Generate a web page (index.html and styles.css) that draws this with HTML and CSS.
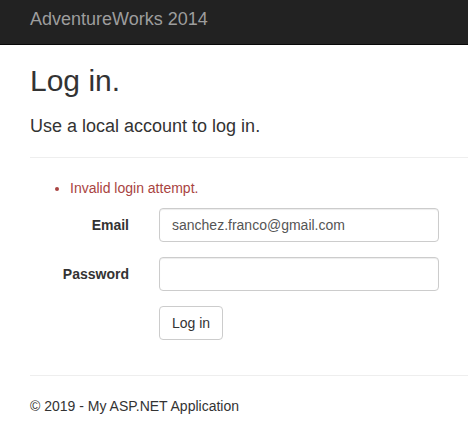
FILE: index.html
```html
<!DOCTYPE html>
<html>
<head>
<meta charset="utf-8">
<title>Log in - AdventureWorks 2014</title>
<link rel="stylesheet" href="styles.css">
</head>
<body>
<div class="navbar">
  <a class="navbar-brand" href="#">AdventureWorks 2014</a>
</div>
<div class="body-content">
  <h2 class="title">Log in.</h2>
  <section class="login">
    <form class="form-horizontal">
      <h4 class="subtitle">Use a local account to log in.</h4>
      <hr class="divider">
      <div class="validation-summary">
        <ul class="errors">
          <li>Invalid login attempt.</li>
        </ul>
      </div>
      <div class="form-group">
        <label class="control-label" for="Email">Email</label>
        <input class="form-control" id="Email" type="text" value="sanchez.franco@gmail.com">
      </div>
      <div class="form-group">
        <label class="control-label" for="Password">Password</label>
        <input class="form-control" id="Password" type="password">
      </div>
      <div class="form-group">
        <span class="control-label"></span>
        <button type="button" class="btn">Log in</button>
      </div>
    </form>
  </section>
  <hr class="divider footer-divider">
  <footer class="footer">
    <p>&copy; 2019 - My ASP.NET Application</p>
  </footer>
</div>
</body>
</html>
```

FILE: styles.css
```css
* {
  box-sizing: border-box;
}

html, body {
  margin: 0;
  padding: 0;
  background: #fff;
}

body {
  font-family: "Liberation Sans", Arial, sans-serif;
  font-size: 14px;
  line-height: 20px;
  color: #333;
  overflow: hidden;
}

.navbar {
  height: 45px;
  background: #222;
  border-bottom: 1px solid #080808;
  padding: 9px 30px 0;
}

.navbar-brand {
  display: block;
  font-size: 18px;
  line-height: 20px;
  color: #9d9d9d;
  text-decoration: none;
}

.body-content {
  padding-left: 30px;
}

.title {
  font-size: 30px;
  font-weight: 500;
  line-height: 33px;
  margin: 19px 0 20px;
}

.subtitle {
  font-size: 18px;
  font-weight: 500;
  line-height: 19.8px;
  margin: 0;
}

.divider {
  border: 0;
  border-top: 1px solid #eee;
  height: 1px;
  margin: 20px 0;
}

.errors {
  margin: 0 0 10px;
  padding-left: 40px;
  color: #a94442;
}

.form-group {
  display: flex;
  align-items: flex-start;
  gap: 30px;
  margin-bottom: 15px;
}

.control-label {
  width: 99px;
  flex: 0 0 99px;
  text-align: right;
  font-weight: bold;
  padding-top: 7px;
  line-height: 20px;
}

.form-control {
  width: 280px;
  height: 34px;
  padding: 6px 12px;
  font-family: inherit;
  font-size: 14px;
  line-height: 20px;
  color: #555;
  background: #fff;
  border: 1px solid #ccc;
  border-radius: 4px;
  box-shadow: inset 0 1px 1px rgba(0, 0, 0, 0.075);
  outline: none;
}

.btn {
  height: 34px;
  padding: 6px 12px;
  font-family: inherit;
  font-size: 14px;
  line-height: 20px;
  color: #333;
  background: #fff;
  border: 1px solid #ccc;
  border-radius: 4px;
  cursor: pointer;
}

.login {
  display: flow-root;
}

.footer-divider {
  margin-top: 20px;
}

.footer p {
  margin: 0 0 10px;
}
```
